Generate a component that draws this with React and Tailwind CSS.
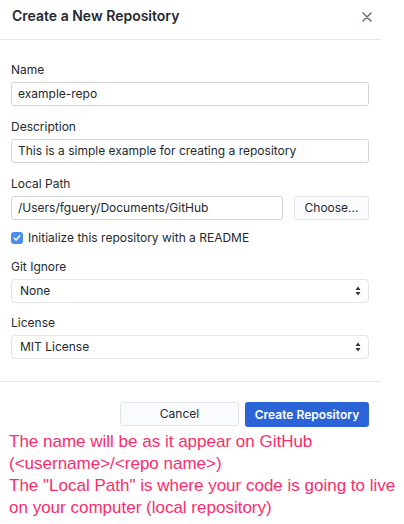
import React from "react";

function Field({ label, children }) {
  return (
    <div className="flex flex-col">
      <label className="h-4 leading-4 mb-1 text-[12px] text-[#24292e]">{label}</label>
      {children}
    </div>
  );
}

function TextBox({ value, className = "" }) {
  return (
    <div className={"h-6 flex items-center pl-[6px] border border-[#d1d5da] rounded-[3px] bg-white text-[12px] text-[#24292e] " + className}>
      {value}
    </div>
  );
}

function SelectBox({ value }) {
  return (
    <div className="h-6 flex items-center justify-between pl-[8px] pr-[7px] border border-[#e1e4e8] rounded-[4px] bg-white text-[12px] text-[#24292e]">
      <span>{value}</span>
      <svg width="6" height="10" viewBox="0 0 6 10">
        <path d="M3 0.5 L5.5 4 L0.5 4 Z" fill="#333" />
        <path d="M3 9.5 L5.5 6 L0.5 6 Z" fill="#333" />
      </svg>
    </div>
  );
}

export default function App() {
  return (
    <div className="w-[404px] h-[524px] bg-white overflow-hidden" style={{ fontFamily: "Inter, 'Liberation Sans', sans-serif" }}>
      <div className="w-[381px]">
        <div className="h-10 flex items-start justify-between pt-[6px] pl-3 pr-[9px] border-b border-[#e1e4e8]">
          <h2 className="text-[14px] leading-[20px] font-semibold text-[#24292e]">Create a New Repository</h2>
          <svg width="10" height="10" viewBox="0 0 10 10" className="mt-[6px]">
            <path d="M1 1 L9 9 M9 1 L1 9" stroke="#6a737d" strokeWidth="1.6" strokeLinecap="round" />
          </svg>
        </div>

        <div className="pl-[11px] pr-3 pt-[22px] pb-[22px] flex flex-col">
          <Field label="Name">
            <TextBox value="example-repo" />
          </Field>
          <div className="mt-[13px]">
            <Field label="Description">
              <TextBox value="This is a simple example for creating a repository" />
            </Field>
          </div>
          <div className="mt-[13px]">
            <Field label="Local Path">
              <div className="flex gap-[11px]">
                <TextBox value="/Users/fguery/Documents/GitHub" className="flex-1" />
                <button className="h-6 w-[75px] border border-[#e1e4e8] rounded-[3px] bg-[#fafbfc] text-[12px] text-[#24292e]">
                  Choose...
                </button>
              </div>
            </Field>
          </div>
          <div className="mt-[10px] h-4 flex items-center gap-[5px]">
            <div className="w-[12px] h-[12px] rounded-[3px] bg-[#4b8ef1] flex items-center justify-center">
              <svg width="8" height="8" viewBox="0 0 8 8">
                <path d="M1.3 4.2 L3.2 6 L6.7 1.8" stroke="white" strokeWidth="1.5" fill="none" strokeLinecap="round" strokeLinejoin="round" />
              </svg>
            </div>
            <span className="text-[12px] text-[#24292e]">Initialize this repository with a README</span>
          </div>
          <div className="mt-[13px]">
            <Field label="Git Ignore">
              <SelectBox value="None" />
            </Field>
          </div>
          <div className="mt-[12px]">
            <Field label="License">
              <SelectBox value="MIT License" />
            </Field>
          </div>
        </div>

        <div className="border-t border-[#e1e4e8] pt-5 pr-3 flex justify-end gap-[6px]">
          <button className="h-6 w-[119px] border border-[#e1e4e8] rounded-[3px] bg-[#fafbfc] text-[12px] text-[#24292e]">
            Cancel
          </button>
          <button className="h-[25px] w-[124px] rounded-[3px] bg-[#2a64d6] text-[12px] font-semibold text-white">
            Create Repository
          </button>
        </div>
      </div>

      <div className="mt-[4px] pl-[9px] text-[17px] leading-[22px] text-[#fd2c6c]" style={{ fontFamily: "'Liberation Sans', Arial, sans-serif" }}>
        <p>The name will be as it appear on GitHub</p>
        <p>(&lt;username&gt;/&lt;repo name&gt;)</p>
        <p>The "Local Path" is where your code is going to live</p>
        <p>on your computer (local repository)</p>
      </div>
    </div>
  );
}
